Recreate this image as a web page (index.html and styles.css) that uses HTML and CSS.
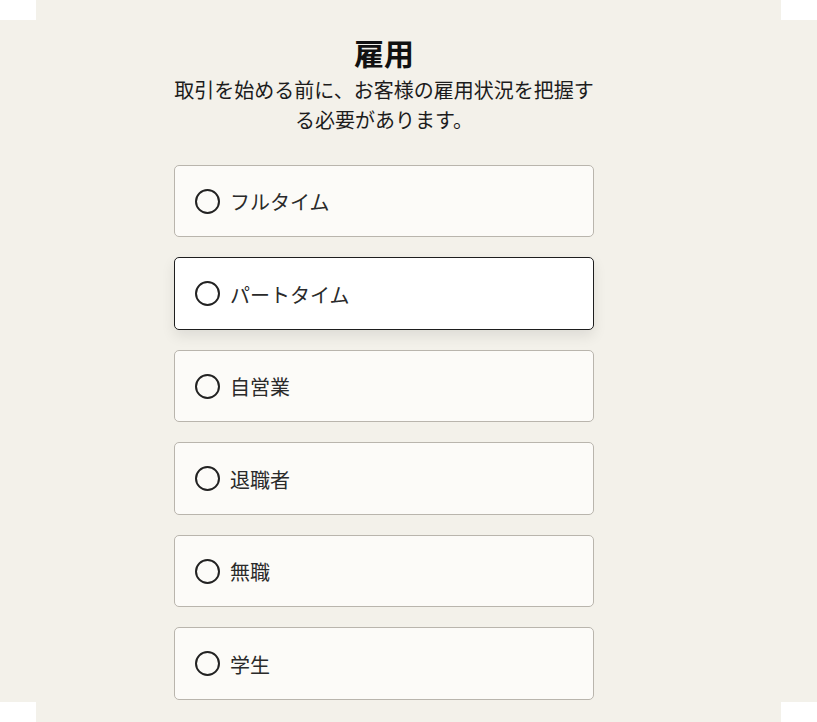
FILE: index.html
```html
<!DOCTYPE html>
<html lang="ja">
<head>
<meta charset="utf-8">
<title>雇用</title>
<link rel="stylesheet" href="styles.css">
</head>
<body>
<main class="frame">
  <section class="panel">
    <header class="intro">
      <h1 class="title">雇用</h1>
      <p class="lead">取引を始める前に、お客様の雇用状況を把握する必要があります。</p>
    </header>
    <div class="options" role="radiogroup">
      <label class="option"><span class="radio"></span><span class="label">フルタイム</span></label>
      <label class="option option-active"><span class="radio"></span><span class="label">パートタイム</span></label>
      <label class="option"><span class="radio"></span><span class="label">自営業</span></label>
      <label class="option"><span class="radio"></span><span class="label">退職者</span></label>
      <label class="option"><span class="radio"></span><span class="label">無職</span></label>
      <label class="option"><span class="radio"></span><span class="label">学生</span></label>
    </div>
  </section>
</main>
</body>
</html>
```
FILE: styles.css
```css
html, body {
  margin: 0;
  padding: 0;
  background: #ffffff;
  height: 722px;
  overflow: hidden;
}
body {
  font-family: "Noto Sans CJK JP", "Noto Sans", sans-serif;
  color: #1c1c1c;
}
.frame {
  width: 745px;
  height: 722px;
  margin: 0 auto;
  background: #f3f1ea;
  box-shadow: -56px 0 0 -20px #f3f1ea, 56px 0 0 -20px #f3f1ea;
  box-sizing: border-box;
  padding: 34px 0 0 138px;
}
.panel {
  width: 420px;
  display: flex;
  flex-direction: column;
}
.intro {
  text-align: center;
  display: flex;
  flex-direction: column;
  gap: 5px;
}
.title {
  margin: 0;
  font-size: 30px;
  line-height: 36px;
  font-weight: 700;
  color: #111;
}
.lead {
  margin: 0;
  font-size: 20px;
  line-height: 30px;
  color: #1c1c1c;
}
.options {
  margin-top: 29.5px;
  display: flex;
  flex-direction: column;
  gap: 20px;
}
.option {
  height: 72.5px;
  box-sizing: border-box;
  border: 1px solid #b9b5ad;
  border-radius: 5px;
  background: #fcfbf8;
  display: flex;
  align-items: center;
  gap: 10px;
  padding: 1px 20px 0;
}
.option-active {
  background: #ffffff;
  border-color: #1e1e1e;
  box-shadow: 0 6px 14px rgba(0, 0, 0, 0.09);
}
.radio {
  width: 25px;
  height: 25px;
  box-sizing: border-box;
  border: 2px solid #222;
  border-radius: 50%;
  flex: none;
}
.label {
  font-size: 20px;
  line-height: 28px;
  color: #2a2a2a;
  position: relative;
  top: 1px;
}
```
